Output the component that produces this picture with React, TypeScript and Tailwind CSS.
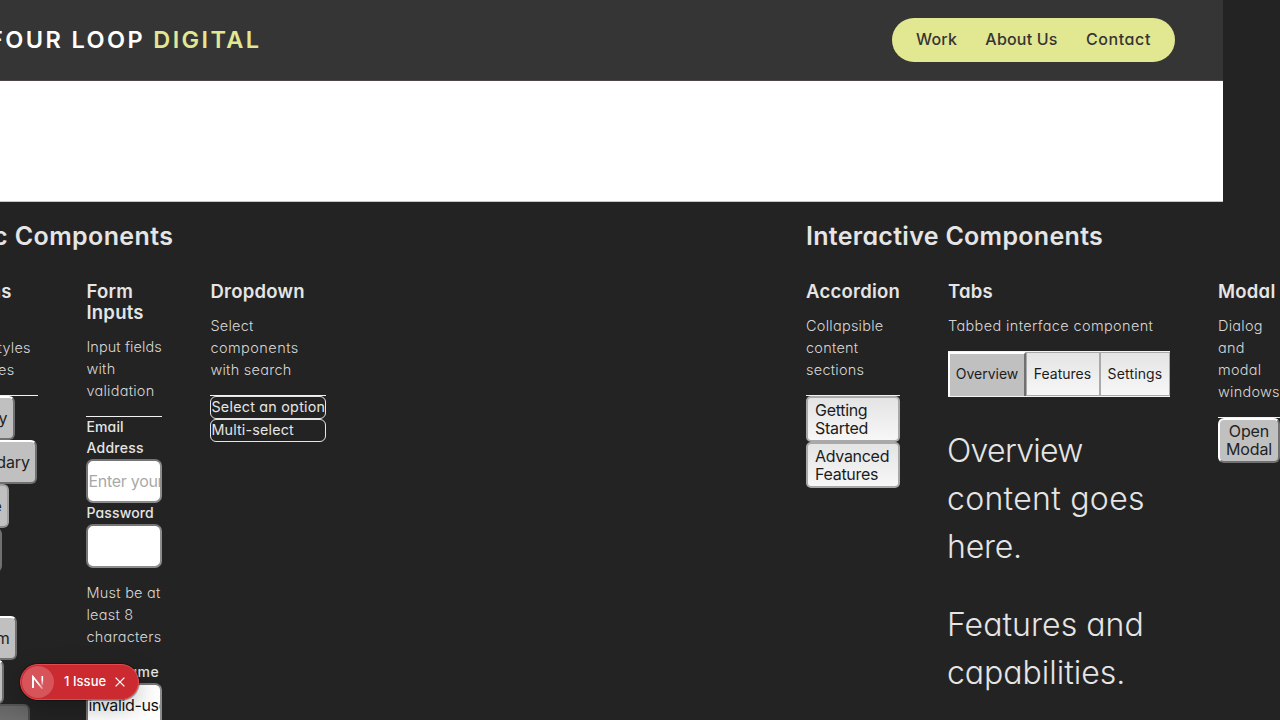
import type { ReactNode } from "react";

function Card({ title, titleClass = "", text, className = "", children }: { title: ReactNode; titleClass?: string; text: string[]; className?: string; children?: ReactNode }) {
  return (
    <section className={"shrink-0 " + className}>
      <h3 className={"pt-px text-[18.5px] leading-[21px] font-semibold whitespace-nowrap tracking-[0.25px] " + titleClass}>{title}</h3>
      <p className="mt-[13px] text-[14.5px] leading-[22px] font-light whitespace-nowrap text-[#d6d6d6]">
        {text.map((line) => {
          const spacing = line.startsWith("Tabbed") ? "tracking-[0.36px]" : line.startsWith("Input") ? "tracking-[0.08px]" : line === "components" ? "tracking-[0.45px]" : "tracking-[0.25px]";
          return (
            <span key={line} className={"block " + spacing}>
              {line}
            </span>
          );
        })}
      </p>
      <div className="mt-[14px] border-t border-[#f2f2f2]">{children}</div>
    </section>
  );
}

const raised = "border-t-white border-l-white border-r-[#707070] border-b-[#707070] bg-[#c0c0c0] text-[#232323]";
const flat = "border-t-[#a0a0a0] border-l-[#a0a0a0] border-r-[#a0a0a0] border-b-[#8a8a8a] bg-[#c0c0c0] text-[#232323]";
const muted = "border-t-[#555] border-l-[#555] border-r-[#4a4a4a] border-b-[#4a4a4a] bg-linear-to-b from-[#666] to-[#777] text-[#3a3a3a]";

function Push({ label, className, tone = raised }: { label: ReactNode; className: string; tone?: string }) {
  return (
    <button className={"flex items-center justify-center rounded-[6px] border-2 text-[16px] leading-[18px] tracking-[-0.1px] [font-feature-settings:normal] " + tone + " " + className}>
      {label}
    </button>
  );
}

function AccordionItem({ children }: { children: ReactNode }) {
  return (
    <button className="block h-[46px] w-[94px] rounded-[5px] border-2 border-[#a9a9a9] bg-linear-to-b from-[#e4e4e4] to-[#f7f7f7] pl-[7px] text-left text-[16px] leading-[18px] tracking-[-0.3px] text-[#1c1c1c] [font-feature-settings:normal]">
      {children}
    </button>
  );
}

const inputClass =
  "block h-11 w-[75.5px] rounded-[7px] border-2 border-t-[#757575] border-l-[#757575] border-r-[#8c8c8c] border-b-[#8c8c8c] bg-white text-[16px] text-[#111] outline-none placeholder:text-[#a9a9a9] [font-feature-settings:normal]";

const labelClass = "block h-[21px] text-[14px] leading-[19px] font-medium";
const selectClass = "h-[23px] w-[116px] rounded-[6px] border border-[#e5e5e5] text-[14.3px] leading-[20px] whitespace-nowrap";

export default function App() {
  return (
    <div className="relative h-[720px] w-[1280px] overflow-hidden bg-[#232323] font-['Inter',sans-serif] text-[#e5e5e5] [font-feature-settings:'cv11']">
      <header className="flex h-[81px] w-[1223px] items-center justify-between border-b border-[#4b4547] bg-[#353535] pr-12">
        <div className="flex w-[261.5px] justify-end text-[23.5px] leading-[80px] font-semibold tracking-[2.4px] whitespace-pre text-white">
          FOUR LOOP <span className="text-[#e2e792]">DIGITAL</span>
        </div>
        <nav className="flex h-11 w-[283px] items-center justify-between rounded-full bg-[#e2e792] px-6 pb-[2px] text-[16px] font-medium text-[#353535]">
          <a className="tracking-[0.2px]">Work</a>
          <a className="tracking-[0.2px]">About Us</a>
          <a className="tracking-[0.6px]">Contact</a>
        </nav>
      </header>
      <div className="h-[121px] w-[1223px] border-b border-[#c4c9c8] bg-white" />

      <main className="-ml-[58.6px] flex">
        <section className="w-[864.6px] shrink-0">
          <h2 className="mt-[18px] mb-7 flex w-[232px] justify-end text-[25px] leading-8 font-semibold tracking-[0.4px] whitespace-nowrap">
            Basic Components
          </h2>
          <div className="flex gap-12">
            <Card title="Buttons" className="w-[97px]" titleClass="w-[72px] tracking-[0.6px]" text={["Various", "button styles", "and states"]}>
              <Push label="Primary" className="h-11 w-[74px]" />
              <Push label="Secondary" className="h-11 w-[96px]" />
              <Push label="Outline" className="h-11 w-[68px]" tone={flat} />
              <Push label="Ghost" className="h-11 w-[61px]" />
              <Push label="Small" className="h-11 w-[57px]" />
              <Push label="Medium" className="h-11 w-[76px]" />
              <Push label="Large" className="h-11 w-[63px]" />
              <Push label="Disabled" className="h-11 w-[89px]" tone={muted} />
            </Card>
            <Card
              title={
                <>
                  Form
                  <br />
                  Inputs
                </>
              }
              className="w-[76px]"
              text={["Input fields", "with", "validation"]}
            >
              <label className={labelClass + " tracking-[0.15px]"}>Email</label>
              <label className={labelClass + " tracking-[0.25px]"}>Address</label>
              <input className={inputClass + " tracking-[-0.28px]"} placeholder="Enter your email" />
              <label className={labelClass + " tracking-[0.15px]"}>Password</label>
              <input className={inputClass} />
              <p className="my-[14px] text-[14.5px] leading-[22px] font-light tracking-[0.25px] whitespace-nowrap text-[#d6d6d6]">
                Must be at
                <br />
                least 8
                <br />
                characters
              </p>
              <label className={labelClass + " tracking-[0.4px]"}>Username</label>
              <input className={inputClass + " tracking-[-0.35px]"} defaultValue="invalid-user" />
            </Card>
            <Card title="Dropdown" className="w-[116px]" text={["Select", "components", "with search"]}>
              <div className={selectClass + " tracking-[0.25px]"}>Select an option</div>
              <div className={selectClass + " tracking-[0.18px]"}>Multi-select</div>
            </Card>
          </div>
        </section>

        <section className="shrink-0">
          <h2 className="mt-[18px] mb-7 text-[25px] leading-8 font-semibold tracking-[0.3px] whitespace-nowrap">Interactive Components</h2>
          <div className="flex gap-12">
            <Card title="Accordion" className="w-[94px]" text={["Collapsible", "content", "sections"]}>
              <AccordionItem>
                Getting
                <br />
                Started
              </AccordionItem>
              <AccordionItem>
                Advanced
                <br />
                Features
              </AccordionItem>
            </Card>
            <Card title="Tabs" className="w-[222px]" text={["Tabbed interface component"]}>
              <div className="flex h-[45px] border-b border-[#f2f2f2] text-[14px] text-[#1c1c1c] [font-feature-settings:normal]">
                <button className="w-[78px] border-t-2 border-r-2 border-l-2 border-t-white border-r-[#707070] border-l-white bg-[#c0c0c0] pb-1">Overview</button>
                <button className="w-[74px] border border-[#a9a9a9] bg-linear-to-b from-[#e4e4e4] to-[#f7f7f7] pr-px pb-[2px]">Features</button>
                <button className="w-[70px] border border-[#a9a9a9] bg-linear-to-b from-[#e4e4e4] to-[#f7f7f7] pb-[2px] tracking-[0.15px]">Settings</button>
              </div>
              <div className="mt-[30px] -ml-px text-[32px] leading-[48px] font-light whitespace-nowrap">
                <p className="mb-[30px]">
                  <span className="tracking-[-0.7px]">Overview</span>
                  <br />
                  <span className="tracking-[0.3px]">content goes</span>
                  <br />
                  <span className="tracking-[-0.2px]">here.</span>
                </p>
                <p>
                  <span className="tracking-[0.05px]">Features and</span>
                  <br />
                  <span className="tracking-[-0.02px]">capabilities.</span>
                </p>
              </div>
            </Card>
            <Card title="Modal" className="w-[62px]" text={["Dialog", "and", "modal", "windows"]}>
              <Push
                label={
                  <>
                    Open
                    <br />
                    Modal
                  </>
                }
                className="h-[45px] w-[62px] pb-[2px]"
              />
            </Card>
          </div>
        </section>
      </main>

      <div className="absolute top-[664px] left-5 flex h-9 w-[119px] items-center rounded-full border border-[#e5484d] bg-[#ca2a30] pl-px text-white shadow-[0_0_0_1px_rgba(0,0,0,0.3),0_8px_24px_rgba(0,0,0,0.25)]">
        <span className="flex size-8 items-center justify-center rounded-full bg-[#d6545a]">
          <svg width="14" height="14" viewBox="0 0 14 14" fill="none">
            <defs>
              <linearGradient id="diag" x1="5" y1="5" x2="13" y2="14" gradientUnits="userSpaceOnUse">
                <stop offset="0.3" stopColor="#fff" />
                <stop offset="1" stopColor="#fff" stopOpacity="0.2" />
              </linearGradient>
              <linearGradient id="stem" x1="0" y1="1" x2="0" y2="11" gradientUnits="userSpaceOnUse">
                <stop offset="0.4" stopColor="#fff" />
                <stop offset="1" stopColor="#fff" stopOpacity="0.1" />
              </linearGradient>
            </defs>
            <path d="M2 13V1.8L11.5 13.8" stroke="url(#diag)" strokeWidth="1.7" />
            <path d="M2 13V1.5" stroke="#fff" strokeWidth="1.7" />
            <path d="M11.3 1V10.5" stroke="url(#stem)" strokeWidth="1.6" />
          </svg>
        </span>
        <span className="ml-[10px] text-[13px] font-medium tracking-[0.05px] [font-feature-settings:normal]">1 Issue</span>
        <svg className="ml-2" width="12" height="12" viewBox="0 0 12 12" fill="none">
          <path d="M1.6 1.6l8.8 8.8M10.4 1.6l-8.8 8.8" stroke="#fff" strokeWidth="1.3" />
        </svg>
      </div>
    </div>
  );
}
